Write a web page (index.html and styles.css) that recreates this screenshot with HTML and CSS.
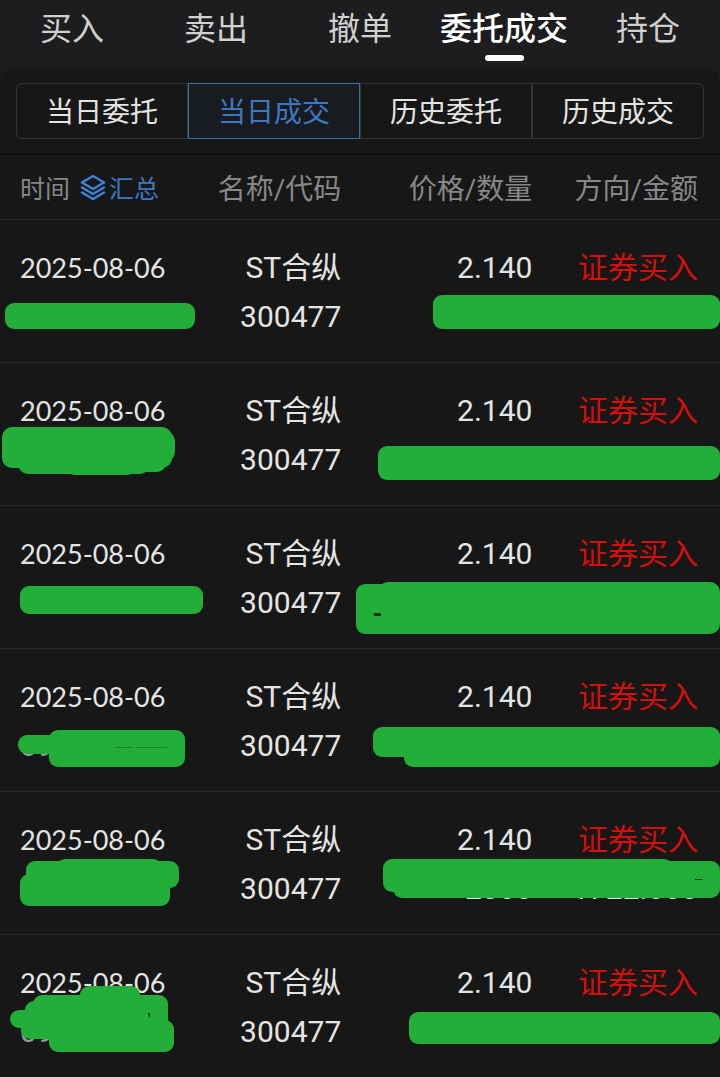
FILE: index.html
```html
<!DOCTYPE html>
<html lang="zh-CN">
<head>
<meta charset="utf-8">
<meta name="viewport" content="width=device-width, initial-scale=1">
<title>委托成交</title>
<link rel="stylesheet" href="styles.css">
</head>
<body>
<nav class="tabs">
  <a class="tab" href="#">买入</a>
  <a class="tab" href="#">卖出</a>
  <a class="tab" href="#">撤单</a>
  <a class="tab tab-active" href="#" aria-current="page">委托成交</a>
  <a class="tab" href="#">持仓</a>
</nav>
<main class="panel">
  <div class="segments">
    <button class="segment" type="button">当日委托</button>
    <button class="segment segment-active" type="button">当日成交</button>
    <button class="segment" type="button">历史委托</button>
    <button class="segment" type="button">历史成交</button>
  </div>
  <table class="deals">
    <thead>
      <tr>
        <th class="col-time"><div class="time-head"><span>时间</span><button class="summary" type="button"><svg class="layers" viewBox="0 0 26 26" aria-hidden="true"><path d="M13 2 24 8.500 13 15 2 8.500ZM2 13.500 13 20 24 13.500M2 18.500 13 25 24 18.500"/></svg>汇总</button></div></th>
        <th class="col-name">名称/代码</th>
        <th class="col-price">价格/数量</th>
        <th class="col-side">方向/金额</th>
      </tr>
    </thead>
    <tbody>
      <tr>
        <td class="date">2025-08-06<svg class="mask mask-left" width="220" height="143" aria-hidden="true"><rect x="5" y="83" width="190" height="26" rx="9"/></svg></td>
        <td>ST合纵<br>300477</td>
        <td>2.140</td>
        <td class="side">证券买入<svg class="mask mask-right" width="380" height="143" aria-hidden="true"><rect x="93" y="75" width="287" height="34" rx="9"/></svg></td>
      </tr>
      <tr>
        <td class="date">2025-08-06<svg class="mask mask-left" width="220" height="143" aria-hidden="true"><rect x="2" y="64" width="170" height="41" rx="10"/><rect x="140" y="67" width="35" height="33" rx="12"/><rect x="18" y="80" width="132" height="31" rx="10"/><rect x="62" y="84" width="78" height="28" rx="14"/><rect x="120" y="80" width="46" height="29" rx="9"/></svg></td>
        <td>ST合纵<br>300477</td>
        <td>2.140</td>
        <td class="side">证券买入<svg class="mask mask-right" width="380" height="143" aria-hidden="true"><rect x="38" y="83" width="342" height="34" rx="9"/></svg></td>
      </tr>
      <tr>
        <td class="date">2025-08-06<svg class="mask mask-left" width="220" height="143" aria-hidden="true"><rect x="20" y="80" width="183" height="28" rx="9"/></svg></td>
        <td>ST合纵<br>300477</td>
        <td>2.140</td>
        <td class="side">证券买入<svg class="mask mask-right" width="380" height="143" aria-hidden="true"><rect x="16" y="78" width="80" height="50" rx="9"/><rect x="38" y="76" width="342" height="52" rx="10"/><path class="gap" d="M34 107h7v3h-7z"/></svg></td>
      </tr>
      <tr>
        <td class="date">2025-08-06<br><span class="clock">09</span><svg class="mask mask-left" width="220" height="143" aria-hidden="true"><rect x="18" y="86" width="60" height="19" rx="9"/><rect x="49" y="81" width="136" height="37" rx="9"/><path class="hairline" d="M115 98.500h18M136 98.500h31"/></svg></td>
        <td>ST合纵<br>300477</td>
        <td>2.140</td>
        <td class="side">证券买入<svg class="mask mask-right" width="380" height="143" aria-hidden="true"><rect x="33" y="78" width="80" height="30" rx="9"/><rect x="64" y="78" width="316" height="40" rx="9"/></svg></td>
      </tr>
      <tr>
        <td class="date">2025-08-06<svg class="mask mask-left" width="220" height="143" aria-hidden="true"><rect x="26" y="69" width="153" height="27" rx="9"/><rect x="56" y="67" width="106" height="30" rx="9"/><rect x="20" y="82" width="150" height="32" rx="9"/><rect x="26" y="72" width="144" height="35" rx="9"/></svg></td>
        <td>ST合纵<br>300477</td>
        <td>2.140<br>2800</td>
        <td class="side">证券买入<br><span class="amount">1722.000</span><svg class="mask mask-right" width="380" height="143" aria-hidden="true"><rect x="43" y="67" width="290" height="33" rx="9"/><rect x="53" y="69" width="327" height="37" rx="9"/><path class="gap" d="M355 87h7v1h-7z"/></svg></td>
      </tr>
      <tr>
        <td class="date">2025-08-06<br><span class="clock">09</span><svg class="mask mask-left" width="220" height="143" aria-hidden="true"><rect x="10" y="75" width="50" height="18" rx="9"/><rect x="25" y="66" width="60" height="30" rx="9"/><rect x="21" y="74" width="80" height="30" rx="9"/><rect x="33" y="60" width="135" height="40" rx="9"/><rect x="80" y="51" width="60" height="30" rx="9"/><rect x="49" y="85" width="125" height="32" rx="9"/><path class="gap" d="M148 78h2v4h-1z"/></svg></td>
        <td>ST合纵<br>300477</td>
        <td>2.140</td>
        <td class="side">证券买入<svg class="mask mask-right" width="380" height="143" aria-hidden="true"><rect x="69" y="77" width="311" height="32" rx="9"/></svg></td>
      </tr>
    </tbody>
  </table>
</main>
</body>
</html>
```

FILE: styles.css
```css
* {
  box-sizing: border-box;
}

body {
  margin: 0;
  background: #1d1d1f;
  color: #e4e4e4;
  font-family: Roboto, "Noto Sans CJK SC", sans-serif;
  font-size: 30px;
}

button {
  margin: 0;
  padding: 0;
  border: 0;
  background: none;
  color: inherit;
  font: inherit;
}

.tabs {
  display: grid;
  grid-template-columns: repeat(5, 1fr);
}

.tab {
  display: flex;
  flex-direction: column;
  align-items: center;
  height: 67px;
  padding-top: 5px;
  color: #d0d0d0;
  font-size: 32px;
  line-height: 48px;
  text-decoration: none;
  white-space: nowrap;
}

.tab-active {
  color: #fff;
  font-weight: 500;
}

.tab-active::after {
  content: "";
  width: 39px;
  height: 6px;
  margin-top: 2px;
  border-radius: 3px;
  background: #fff;
}

.panel {
  padding-top: 16px;
  border-radius: 16px 16px 0 0;
  background: #171717;
}

.segments {
  display: grid;
  grid-template-columns: repeat(4, 1fr);
  margin: 0 16px 15px;
}

.segment {
  height: 56px;
  padding-bottom: 2px;
  border: 1px solid #353535;
  font-size: 28px;
}

.segment:first-child {
  border-radius: 6px 0 0 6px;
}

.segment:last-child {
  border-radius: 0 6px 6px 0;
}

.segment-active {
  border-color: #3d6ea8;
  background: #181c21;
  color: #3d79c2;
}

.deals {
  width: 100%;
  border-top: 1px solid #090909;
  border-collapse: separate;
  border-spacing: 0;
  table-layout: fixed;
}

.deals th {
  height: 65px;
  padding: 0 22px 0 0;
  border-bottom: 1px solid #292929;
  color: #87878a;
  font-size: 28px;
  font-weight: 400;
  text-align: right;
  white-space: nowrap;
}

.deals .col-time {
  width: 27%;
  padding: 0 0 0 20px;
  font-size: 25px;
}

.deals .col-name {
  padding-right: 0;
}

.col-name {
  width: 20.4%;
}

.col-price {
  width: 29.6%;
}

.col-side {
  width: 23%;
}

.time-head,
.summary {
  display: flex;
  align-items: center;
}

.summary {
  margin-left: 10px;
  gap: 3px;
  color: #3d79c2;
}

.layers {
  width: 26px;
  height: 26px;
  fill: none;
  stroke: #3f82d6;
  stroke-width: 2.5;
  stroke-linejoin: round;
  stroke-linecap: round;
}

.deals td {
  height: 143px;
  padding: 23px 22px 21px 0;
  border-bottom: 1px solid #292929;
  line-height: 49px;
  text-align: right;
  vertical-align: top;
  white-space: nowrap;
}

.deals td:nth-child(2) {
  padding-right: 0;
}

.deals .date {
  position: relative;
  padding-left: 20px;
  font-family: Lato, sans-serif;
  font-size: 27px;
  text-align: left;
}

.clock {
  color: #98989a;
  font-family: Roboto, sans-serif;
  font-size: 30px;
}

.deals .side {
  position: relative;
  color: #d40f0c;
}

.deals .amount {
  color: #e4e4e4;
}

.mask {
  position: absolute;
  top: 0;
  fill: #23ad39;
}

.mask-left {
  left: 0;
}

.mask-right {
  right: 0;
}

.gap {
  fill: #103517;
}

.hairline {
  stroke: #1b7e2b;
}
```
